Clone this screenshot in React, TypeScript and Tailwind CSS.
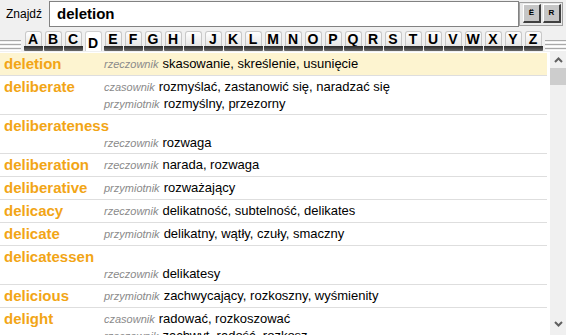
import React from "react";

type Entry = { word: string; defs: [string, string][]; long?: boolean; hl?: boolean };

const entries: Entry[] = [
  { word: "deletion", defs: [["rzeczownik", "skasowanie, skreślenie, usunięcie"]], hl: true },
  {
    word: "deliberate",
    defs: [
      ["czasownik", "rozmyślać, zastanowić się, naradzać się"],
      ["przymiotnik", "rozmyślny, przezorny"],
    ],
  },
  { word: "deliberateness", defs: [["rzeczownik", "rozwaga"]], long: true },
  { word: "deliberation", defs: [["rzeczownik", "narada, rozwaga"]] },
  { word: "deliberative", defs: [["przymiotnik", "rozważający"]] },
  { word: "delicacy", defs: [["rzeczownik", "delikatność, subtelność, delikates"]] },
  { word: "delicate", defs: [["przymiotnik", "delikatny, wątły, czuły, smaczny"]] },
  { word: "delicatessen", defs: [["rzeczownik", "delikatesy"]], long: true },
  { word: "delicious", defs: [["przymiotnik", "zachwycający, rozkoszny, wyśmienity"]] },
  {
    word: "delight",
    defs: [
      ["czasownik", "radować, rozkoszować"],
      ["rzeczownik", "zachwyt, radość, rozkosz"],
    ],
  },
];

const letters = "ABCDEFGHIJKLMNOPQRSTUVWXYZ".split("");

function DefLine({ pos, text, first }: { pos: string; text: string; first: boolean }) {
  return (
    <div
      className={
        first
          ? "flex items-baseline h-[18px] leading-[18px] whitespace-nowrap"
          : "flex items-baseline h-[16px] leading-[16px] whitespace-nowrap"
      }
    >
      <span className="text-[11px] italic text-[#8a8a8a] mr-[4px]">{pos}</span>
      <span className="text-[13px] text-black">{text}</span>
    </div>
  );
}

function Row({ e }: { e: Entry }) {
  return (
    <div
      className={
        e.hl
          ? "border-b border-[#dedede] pt-[2px] pb-[2px] bg-[#fdf4d0]"
          : "border-b border-[#dedede] pt-[2px] pb-[2px]"
      }
    >
      {e.long ? (
        <>
          <div className="pl-[4px] h-[18px] leading-[18px] text-[15px] font-bold text-[#f2a516]">{e.word}</div>
          <div className="pl-[104px]">
            {e.defs.map((d, i) => (
              <DefLine key={i} pos={d[0]} text={d[1]} first={false} />
            ))}
          </div>
        </>
      ) : (
        <div className="flex">
          <div className="w-[104px] shrink-0 pl-[4px] h-[18px] leading-[18px] text-[15px] font-bold text-[#f2a516]">
            {e.word}
          </div>
          <div className="flex-1">
            {e.defs.map((d, i) => (
              <DefLine key={i} pos={d[0]} text={d[1]} first={i === 0} />
            ))}
          </div>
        </div>
      )}
    </div>
  );
}

function Grooves() {
  return (
    <div className="flex-1 flex flex-col gap-[1px] mt-[10px]">
      <div className="h-px bg-[#a9a9a9]" />
      <div className="h-px bg-white" />
      <div className="h-px bg-[#a9a9a9]" />
      <div className="h-px bg-white" />
      <div className="h-px bg-[#a9a9a9]" />
      <div className="h-px bg-white" />
      <div className="h-px bg-[#a9a9a9]" />
    </div>
  );
}

function Key({ l }: { l: string }) {
  if (l === "D") {
    return (
      <div className="w-[20px] h-[21px] flex justify-center">
        <div className="w-[17px] h-[20px] mt-[1px] rounded-t-[3px] bg-white border border-b-0 border-[#d0d0d0] flex items-end justify-center text-[14px] font-bold leading-[16px] text-black">
          {l}
        </div>
      </div>
    );
  }
  return (
    <div className="w-[20px] h-[21px] flex flex-col items-center">
      <div className="w-[17px] h-[15px] mt-[1px] rounded-t-[3px] bg-gradient-to-b from-white to-[#e6e6e6] border border-b-0 border-[#c8c8c8] flex items-end justify-center text-[14px] font-bold leading-[13px] text-black">
        {l}
      </div>
      <div className="w-[19px] h-[5px] bg-gradient-to-b from-[#2a2a2a] to-[#6a6a6a] rounded-b-[1px]" />
    </div>
  );
}

function Chevron({ down }: { down?: boolean }) {
  return (
    <svg width="9" height="6" viewBox="0 0 9 6">
      <path
        d={down ? "M1 1 L4.5 4.5 L8 1" : "M1 5 L4.5 1.5 L8 5"}
        fill="none"
        stroke="#606060"
        strokeWidth="2"
      />
    </svg>
  );
}

export default function App() {
  return (
    <div
      className="w-[566px] h-[335px] overflow-hidden bg-[#f0f0f0] flex flex-col"
      style={{ fontFamily: '"Liberation Sans", Arial, sans-serif' }}
    >
      {/* top bar */}
      <div className="h-[28px] flex items-start shrink-0">
        <div className="w-[49px] pl-[6px] text-[12px] leading-[28px] text-black">Znajdź</div>
        <input
          readOnly
          value="deletion"
          className="mt-[1px] w-[470px] h-[26px] border border-[#828282] bg-white pl-[7px] pb-[2px] text-[15px] font-bold text-black outline-none"
          style={{ fontFamily: '"Liberation Sans", Arial, sans-serif' }}
        />
        <div className="mt-[2px] w-[44px] h-[24px] border border-[#a0a0a0] bg-[#e8e8e8] flex items-start gap-[2px] pl-[3px] pt-[1px]">
          <div className="w-[18px] h-[19px] bg-[#c6c6c6] border-t border-l border-white border-b-2 border-r-2 border-b-[#404040] border-r-[#404040] flex items-center justify-center text-[8px] font-bold leading-none text-black">
            Ë
          </div>
          <div className="w-[18px] h-[19px] bg-[#c6c6c6] border-t border-l border-white border-b-2 border-r-2 border-b-[#404040] border-r-[#404040] flex items-center justify-center text-[8px] font-bold leading-none text-black">
            R
          </div>
        </div>
      </div>

      {/* alphabet */}
      <div className="h-[24px] flex items-start shrink-0 pt-[2px]">
        <Grooves />
        <div className="flex mx-[2px]">
          {letters.map((l) => (
            <Key key={l} l={l} />
          ))}
        </div>
        <Grooves />
      </div>

      {/* list */}
      <div className="flex-1 flex min-h-0 bg-white">
        <div className="flex-1 overflow-hidden pt-[1px] mr-[3px]">
          {entries.map((e) => (
            <Row key={e.word} e={e} />
          ))}
        </div>
        <div className="w-[16px] bg-[#f0f0f0] flex flex-col shrink-0">
          <div className="h-[16px] flex items-center justify-center">
            <Chevron />
          </div>
          <div className="h-[17px] bg-[#cdcdcd]" />
          <div className="flex-1" />
          <div className="h-[18px] flex items-start justify-center pt-[4px]">
            <Chevron down />
          </div>
        </div>
      </div>
    </div>
  );
}
